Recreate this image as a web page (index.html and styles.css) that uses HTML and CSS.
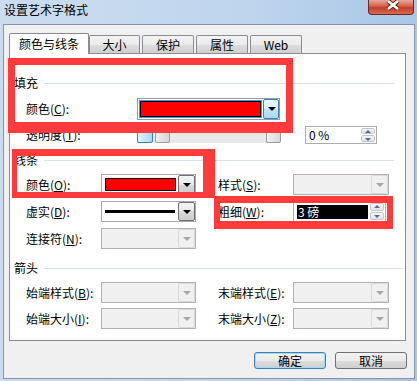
FILE: index.html
```html
<!DOCTYPE html>
<html>
<head>
	<meta charset="utf-8" />
	<link rel="stylesheet" href="styles.css">
</head>
<body>
	<div class="window">
		<div class="titlebar">
			<span class="title">设置艺术字格式</span>
			<span class="close">
				<svg width="46" height="15" viewBox="0 0 46 15">
					<path d="M20 2 L30 10 M30 2 L20 10" stroke="#5a2418" stroke-width="4.6" fill="none" />
					<path d="M20 2 L30 10 M30 2 L20 10" stroke="#fff" stroke-width="2.6" fill="none" />
				</svg>
			</span>
		</div>
		<div class="client">
			<div class="tabs">
				<span class="tab active">颜色与线条</span>
				<span class="tab first">大小</span>
				<span class="tab">保护</span>
				<span class="tab">属性</span>
				<span class="tab">Web</span>
			</div>
			<div class="panel">
				<div class="legend">填充</div>
				<div class="row row-c">
					<span class="lbl wide">颜色(<u>C</u>):</span>
					<div class="combo focus">
						<span class="value"><span class="swatch"></span></span>
						<span class="drop"></span>
					</div>
				</div>
				<div class="row row-t">
					<span class="lbl wide">透明度(<u>T</u>):</span>
					<div class="slider">
						<span class="sbtn hot"></span>
						<span class="thumb"></span>
						<span class="sbtn end"></span>
					</div>
					<div class="spin pct">
						<span class="text">0 %</span>
						<span class="arrows"><span class="up"></span><span class="down"></span></span>
					</div>
				</div>

				<div class="legend">线条</div>
				<div class="row">
					<span class="lbl">颜色(<u>O</u>):</span>
					<div class="combo left">
						<span class="value"><span class="swatch"></span></span>
						<span class="drop"></span>
					</div>
					<span class="lbl right">样式(<u>S</u>):</span>
					<div class="combo disabled">
						<span class="value"></span>
						<span class="drop"></span>
					</div>
				</div>
				<div class="row">
					<span class="lbl">虚实(<u>D</u>):</span>
					<div class="combo left">
						<span class="value"><span class="stroke"></span></span>
						<span class="drop"></span>
					</div>
					<span class="lbl right">粗细(<u>W</u>):</span>
					<div class="spin weight">
						<span class="text"><span class="sel">3 磅</span></span>
						<span class="arrows"><span class="up"></span><span class="down"></span></span>
					</div>
				</div>
				<div class="row">
					<span class="lbl">连接符(<u>N</u>):</span>
					<div class="combo left disabled">
						<span class="value"></span>
						<span class="drop"></span>
					</div>
				</div>

				<div class="legend arrows-legend">箭头</div>
				<div class="row">
					<span class="lbl">始端样式(<u>B</u>):</span>
					<div class="combo left disabled">
						<span class="value"></span>
						<span class="drop"></span>
					</div>
					<span class="lbl right">末端样式(<u>E</u>):</span>
					<div class="combo disabled">
						<span class="value"></span>
						<span class="drop"></span>
					</div>
				</div>
				<div class="row row-last">
					<span class="lbl">始端大小(<u>I</u>):</span>
					<div class="combo left disabled">
						<span class="value"></span>
						<span class="drop"></span>
					</div>
					<span class="lbl right">末端大小(<u>Z</u>):</span>
					<div class="combo disabled">
						<span class="value"></span>
						<span class="drop"></span>
					</div>
				</div>
			</div>
			<div class="buttons">
				<span class="btn default">确定</span>
				<span class="btn">取消</span>
			</div>
		</div>

		<!-- hand-drawn highlight boxes -->
		<div class="mark mark-fill"></div>
		<div class="mark mark-line"></div>
		<div class="mark mark-weight"></div>
	</div>
</body>
</html>
```

FILE: styles.css
```css
* {
	box-sizing: border-box;
}

body {
	margin: 0;
	width: 417px;
	height: 381px;
	overflow: hidden;
	font-family: "Noto Sans CJK SC", "Liberation Sans", sans-serif;
	font-size: 12px;
	color: #000;
}

u {
	text-decoration: underline;
}

.window {
	position: relative;
	width: 417px;
	height: 381px;
	display: flex;
	flex-direction: column;
	padding: 0 2px 2px 3px;
	background: linear-gradient(90deg, #cbdcef 0%, #c0d6ee 55%, #a9c6e7 100%);
}

.titlebar {
	height: 24px;
	display: flex;
	align-items: flex-start;
}

.title {
	padding: 2px 0 0 1px;
	line-height: 16px;
}

.close {
	margin-left: auto;
	margin-right: 1px;
	width: 46px;
	height: 15px;
	border: 1px solid #6b2a1f;
	border-top: none;
	border-radius: 0 0 4px 4px;
	background: linear-gradient(#e9a898, #d0604a 45%, #c13f27 55%, #d86a4f);
	overflow: hidden;
}

.close svg {
	display: block;
	margin: -1px 0 0 -1px;
}

.client {
	flex: 1;
	border: 1px solid #8594a6;
	background-color: #f0f0f0;
	padding: 8px 8px 0 5px;
}

.tabs {
	display: flex;
	align-items: flex-end;
	height: 20px;
}

.tab {
	width: 52px;
	height: 18px;
	margin-right: 2px;
	border: 1px solid #898c95;
	border-bottom: none;
	border-radius: 2px 2px 0 0;
	text-align: center;
	line-height: 17px;
	background: linear-gradient(#f3f3f3, #ebebeb 50%, #dedede 50%, #d0d0d0);
}

.tab.first {
	width: 51px;
}

.tab.active {
	position: relative;
	z-index: 1;
	width: 80px;
	height: 21px;
	margin-right: 0;
	margin-bottom: -1px;
	line-height: 20px;
	background: #fff;
}

.panel {
	height: 288px;
	border: 1px solid #898c95;
	background-color: #fff;
}

.legend {
	display: flex;
	align-items: center;
	height: 14px;
	margin-top: 10px;
	padding-left: 4px;
	line-height: 14px;
}

.legend:first-child {
	margin-top: 22px;
}

.legend::after {
	content: "";
	flex: 1;
	margin: 0 11px 0 6px;
	border-top: 1px solid #d5dfe5;
}

.legend.arrows-legend {
	margin-top: 12px;
}

.legend.arrows-legend::after {
	margin-right: 2px;
}

.row {
	display: flex;
	align-items: center;
	height: 21px;
	margin-top: 6px;
	padding-left: 16px;
}

.legend + .row {
	margin-top: 7px;
}

.row.row-c {
	height: 22px;
	margin-top: 8px;
}

.row.row-t {
	height: 17px;
	margin-top: 6px;
}

.row.row-last {
	margin-top: 5px;
}

.lbl {
	width: 75px;
	line-height: 14px;
	white-space: nowrap;
}

.lbl.wide {
	width: 111px;
}

.lbl.right {
	margin-left: 22px;
}

/* combo boxes */
.combo {
	display: flex;
	width: 96px;
	height: 21px;
	border: 1px solid #a3a8ae;
	background-color: #fff;
}

.combo.left {
	width: 95px;
}

.combo .value {
	flex: 1;
	display: flex;
	align-items: center;
	padding: 3px 2px 3px 3px;
}

.swatch {
	flex: 1;
	align-self: stretch;
	background-color: #f00;
	border: 1px solid #000;
}

.stroke {
	flex: 1;
	height: 3px;
	margin-right: 1px;
	background-color: #000;
}

.combo .drop {
	position: relative;
	width: 17px;
	border: 1px solid #6f6f6f;
	border-radius: 2px;
	background: linear-gradient(#f4f4f4, #e9e9e9 50%, #d9d9d9 50%, #cdcdcd);
}

.combo .drop::after {
	content: "";
	position: absolute;
	left: 4px;
	top: 7px;
	border-left: 4px solid transparent;
	border-right: 4px solid transparent;
	border-top: 4px solid #000;
}

.combo.focus {
	width: 143px;
	height: 22px;
	border-color: #9a9a9a;
}

.combo.focus .value {
	padding: 1px;
	margin: 1px 1px 1px 1px;
	background-color: #3399ff;
}

.combo.focus .drop {
	width: 16px;
	border-color: #3c7fb1;
	background: linear-gradient(#eaf6fd, #d9f0fc 50%, #bee6fd 50%, #a7d9f5);
}

.combo.disabled {
	border-color: #adb2b5;
	background-color: #f0f0f0;
}

.combo.disabled .drop {
	border-color: #dadada;
	background: #f0f0f0;
}

.combo.disabled .drop::after {
	border-top-color: #a6a6a6;
}

/* scroll-like slider */
.slider {
	display: flex;
	width: 144px;
	height: 16px;
	background-color: #e8e8e8;
}

.sbtn {
	width: 16px;
	border: 1px solid #9c9c9c;
	border-radius: 2px;
	background: linear-gradient(90deg, #f2f2f2, #dadada);
}

.sbtn.hot {
	border-color: #3c7fb1;
	background: linear-gradient(90deg, #e3f2fc, #a9d7f4);
}

.sbtn.end {
	margin-left: auto;
	width: 15px;
}

.thumb {
	width: 15px;
	margin-left: 2px;
	border: 1px solid #9c9c9c;
	border-radius: 2px;
	background: linear-gradient(90deg, #f0f0f0, #d6d6d6);
}

/* spinner fields */
.spin {
	display: flex;
	border: 1px solid #abadb3;
	background-color: #fff;
}

.spin.pct {
	width: 72px;
	height: 18px;
	margin-left: 24px;
}

.spin.weight {
	width: 93px;
	height: 21px;
}

.spin .text {
	flex: 1;
	display: flex;
	align-items: center;
	padding-left: 3px;
	line-height: 14px;
}

.sel {
	flex: 1;
	margin: 0 2px 0 0;
	padding-left: 1px;
	height: 14px;
	background-color: #000;
	color: #fff;
}

.arrows {
	display: flex;
	flex-direction: column;
	width: 15px;
	padding: 1px 1px 1px 0;
	gap: 1px;
}

.arrows span {
	position: relative;
	flex: 1;
	border: 1px solid #c3c7cc;
	border-radius: 2px;
	background: linear-gradient(#f6f6f6, #e2e2e2);
}

.arrows span::after {
	content: "";
	position: absolute;
	left: 3px;
	border-left: 3px solid transparent;
	border-right: 3px solid transparent;
}

.arrows .up::after {
	top: 1px;
	border-bottom: 3px solid #4c6ca4;
}

.arrows .down::after {
	top: 2px;
	border-top: 3px solid #4c6ca4;
}

/* dialog buttons */
.buttons {
	display: flex;
	justify-content: flex-end;
	gap: 9px;
	margin-top: 11px;
	margin-right: -1px;
}

.btn {
	width: 72px;
	height: 17px;
	border: 1px solid #707070;
	border-radius: 3px;
	text-align: center;
	line-height: 15px;
	background: linear-gradient(#f2f2f2, #ebebeb 50%, #dddddd 50%, #cfcfcf);
}

.btn.default {
	border-color: #3c7fb1;
	box-shadow: inset 0 0 0 1px #a6d8f4;
}

/* red annotation boxes over the dialog */
.mark {
	position: absolute;
	border: 7px solid #fd3b3b;
}

.mark-fill {
	left: 8px;
	top: 58px;
	width: 285px;
	height: 75px;
	border-bottom-width: 11px;
}

.mark-line {
	left: 12px;
	top: 149px;
	width: 203px;
	height: 49px;
	border-width: 7px 12px 6px 5px;
}

.mark-weight {
	left: 214px;
	top: 196px;
	width: 179px;
	height: 33px;
	border-width: 7px 6px 8px 6px;
}
```
